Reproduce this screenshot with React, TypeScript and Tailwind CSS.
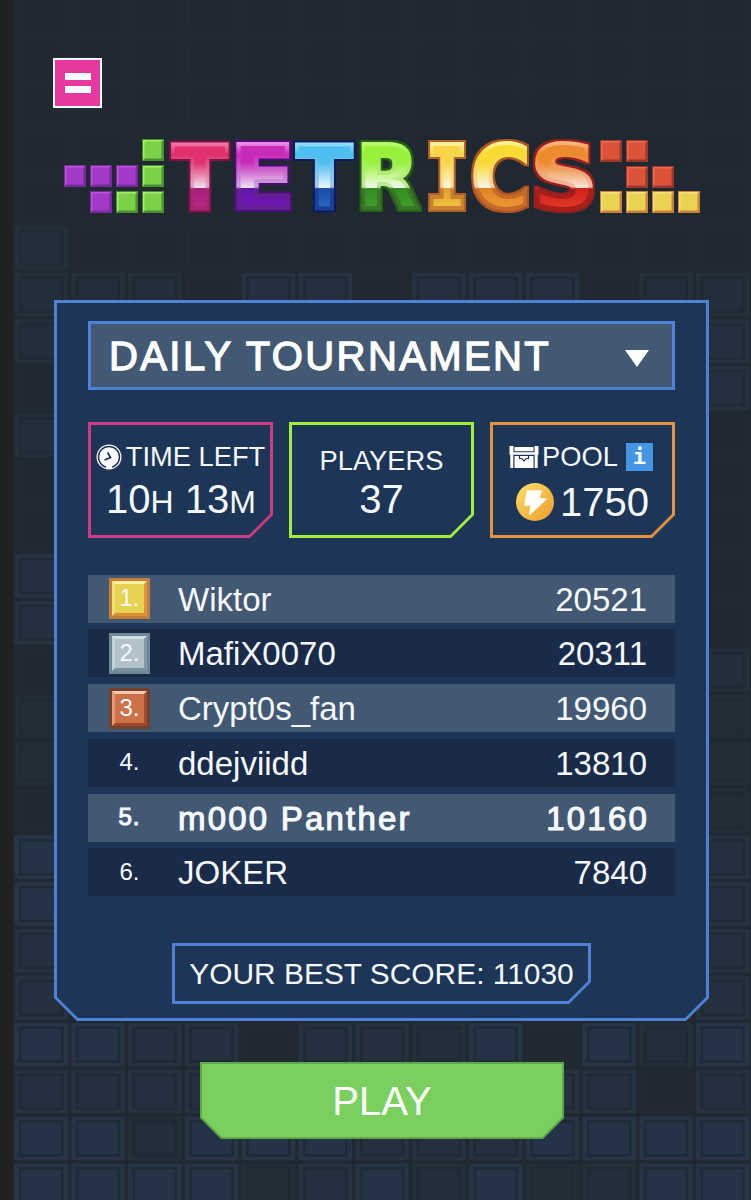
import { ReactNode, useState } from 'react'

type Player = {
  name: string
  score: number
  current?: boolean
}

const players: Player[] = [
  { name: 'Wiktor', score: 20521 },
  { name: 'MafiX0070', score: 20311 },
  { name: 'Crypt0s_fan', score: 19960 },
  { name: 'ddejviidd', score: 13810 },
  { name: 'm000 Panther', score: 10160, current: true },
  { name: 'JOKER', score: 7840 },
]

export default function App() {
  return (
    <div className="relative isolate h-[1200px] w-[751px] overflow-hidden bg-[#202931] font-['Liberation_Sans',sans-serif] text-[#f5f9ff]">
      <BlockBackground />
      <div className="flex flex-col pt-[58px]">
        <MenuButton />
        <Logo />
        <Tournament />
        <button className="ml-[200px] mt-[41px] h-[77px] w-[364px] bg-[#60a84c] p-[2px] [clip-path:polygon(0_0,100%_0,100%_56px,343px_100%,21px_100%,0_56px)]">
          <span className="flex h-full w-full items-center justify-center bg-[#7acf5e] text-[40px] leading-none text-white [clip-path:polygon(0_0,100%_0,100%_53px,340px_100%,20px_100%,0_53px)]">
            PLAY
          </span>
        </button>
      </div>
    </div>
  )
}

function MenuButton() {
  return (
    <button className="ml-[53px] flex h-[50px] w-[49px] flex-col items-center justify-center gap-[6px] border-2 border-white bg-[#e5399f]">
      <span className="h-[7px] w-[26px] bg-white" />
      <span className="h-[7px] w-[26px] bg-white" />
    </button>
  )
}

function Tournament() {
  const [open, setOpen] = useState(false)

  return (
    <div className="ml-[54px] mt-[50px] h-[721px] w-[655px] bg-[#4f82d6] p-[3px] [clip-path:polygon(0_0,100%_0,100%_698px,632px_100%,23px_100%,0_698px)]">
      <div className="flex h-full flex-col items-center bg-[#1d3557] px-[31px] pt-[18px] [clip-path:polygon(0_0,100%_0,100%_694px,628px_100%,21px_100%,0_694px)]">
        <button
          onClick={() => setOpen(!open)}
          className="flex h-[69px] w-full shrink-0 items-center justify-between border-[3px] border-[#4f82d6] bg-[#435872] pl-[18px] pr-[23px]"
        >
          <span className="whitespace-nowrap text-[40px] leading-none tracking-[2.4px] text-white [-webkit-text-stroke:1.3px_white]">DAILY TOURNAMENT</span>
          <svg className="mt-[5px] h-[17px] w-[24px]" viewBox="0 0 24 17">
            <path d={open ? 'M0 17h24L12 0z' : 'M0 0h24L12 17z'} fill="white" />
          </svg>
        </button>

        <div className="mt-[32px] flex w-full justify-between">
          <StatBox border="bg-[#cf3a84]">
            <div className="mt-[14px] flex items-center gap-[4px]">
              <ClockIcon />
              <span className="whitespace-nowrap text-[27.3px] leading-[36px]">TIME LEFT</span>
            </div>
            <p className="mt-[2px] whitespace-nowrap pl-px text-[40px] leading-[44px]">10<span className="text-[32px]">H</span> 13<span className="text-[32px]">M</span></p>
          </StatBox>
          <StatBox border="bg-[#a3ee3c]">
            <p className="mt-[18px] text-[27.3px] leading-[36px]">PLAYERS</p>
            <p className="-mt-[2px] text-[40px] leading-[44px]">37</p>
          </StatBox>
          <StatBox border="bg-[#e3923f]">
            <div className="mt-[14px] flex items-center pr-[3px]">
              <ChestIcon />
              <span className="ml-[3px] text-[27.3px] leading-[36px]">POOL</span>
              <span className="ml-[8px] flex h-[28px] w-[27px] items-center justify-center bg-[#4496e4] font-['DejaVu_Sans_Mono',monospace] text-[22px] font-bold leading-none text-white">i</span>
            </div>
            <div className="mt-[5px] flex items-center gap-[6px]">
              <CoinIcon />
              <span className="text-[40px] leading-[44px]">1750</span>
            </div>
          </StatBox>
        </div>

        <div className="mt-[36.5px] flex w-full flex-col gap-[6.8px]">
          {players.map((player, i) => <PlayerRow key={player.name} player={player} rank={i + 1} />)}
        </div>

        <div className="mt-[46.5px] h-[61px] w-[419px] shrink-0 bg-[#4f82d6] p-[3px] [clip-path:polygon(0_0,100%_0,100%_39px,397px_100%,0_100%)]">
          <div className="flex h-full items-center justify-center whitespace-nowrap bg-[#1d3557] pt-px text-[29.9px] leading-none [clip-path:polygon(0_0,100%_0,100%_35px,393px_100%,0_100%)]">
            YOUR BEST SCORE: 11030
          </div>
        </div>
      </div>
    </div>
  )
}

function StatBox({ border, children }: { border: string, children: ReactNode }) {
  return (
    <div className={`${border} h-[116px] w-[185px] p-[3px] [clip-path:polygon(0_0,100%_0,100%_93px,162px_100%,0_100%)]`}>
      <div className="flex h-full flex-col items-center bg-[#1d3557] [clip-path:polygon(0_0,100%_0,100%_89px,158px_100%,0_100%)]">
        {children}
      </div>
    </div>
  )
}

const medals = [
  'bg-[#e7d351] border-t-[#fbf0a0] border-l-[#f5e27a] border-r-[#d9953f] border-b-[#dc8b38] outline-[#c47d3d]',
  'bg-[#b2c1ca] border-t-[#d3dfe5] border-l-[#c5d2d9] border-r-[#8297a4] border-b-[#7b909d] outline-[#6f8896]',
  'bg-[#cc7148] border-t-[#f9c9ab] border-l-[#e69870] border-r-[#a14c2c] border-b-[#9b492a] outline-[#74402e]',
]

function PlayerRow({ player, rank }: { player: Player, rank: number }) {
  const medal = medals[rank - 1]
  return (
    <div className={`${rank % 2 ? 'bg-[#435872]' : 'bg-[#1a2b49]'} flex h-[48px] items-center pl-[21px] pr-[28px] text-[33px] leading-none ${player.current ? 'tracking-[2.2px] [-webkit-text-stroke:1.1px_#f5f9ff]' : ''}`}>
      <span className={`flex h-[41px] w-[41px] items-center justify-center pb-px text-[24px] ${player.current ? 'tracking-[1px]' : ''} ${medal ? medal + ' border-[6px] outline-[3px] -outline-offset-[3px]' : ''}`}>
        {rank}.
      </span>
      <span className="ml-[28px] flex-1 whitespace-nowrap pt-px">{player.name}</span>
      <span className={player.current ? '-mr-[2px] pt-px' : 'pt-px'}>{player.score}</span>
    </div>
  )
}

function ClockIcon() {
  return (
    <svg className="h-[26px] w-[26px] shrink-0" viewBox="0 0 26 26">
      <circle cx="13" cy="13" r="12.5" fill="white" />
      <circle cx="13" cy="13" r="10.5" fill="none" stroke="#1d3557" strokeWidth="1.5" />
      <path d="M10 22h6v3h-6z" fill="white" />
      <path d="M11.5 8.5l3 5-6 2.5" fill="none" stroke="#1d3557" strokeWidth="1.8" />
    </svg>
  )
}

function ChestIcon() {
  return (
    <svg className="h-[22px] w-[30px] shrink-0" viewBox="0 0 30 22">
      <path d="M.5 0h4v8h-4zM25.5 0h4v8h-4zM5.5 1h19v4.3h-19zM.5 6.3h29v2.5h-29z" fill="white" />
      <path d="M1.3 8.5h3V22h-3zM25.7 8.5h3V22h-3zM5.5 10h19v12h-19z" fill="white" />
      <path d="M10.5 9.7v2.8h2.3l2.2 2.3 2.2-2.3h2.3V9.7" fill="none" stroke="#1d3557" strokeWidth="1.2" />
    </svg>
  )
}

function CoinIcon() {
  return (
    <svg className="h-[38px] w-[38px] shrink-0" viewBox="0 0 38 38">
      <defs>
        <linearGradient id="coin" x1="0" y1="0" x2="1" y2="1">
          <stop offset="0" stopColor="#ffe06a" />
          <stop offset="1" stopColor="#ec9a2c" />
        </linearGradient>
      </defs>
      <circle cx="19" cy="19" r="19" fill="url(#coin)" />
      <path d="M11.5 8h13.5l-2.5 8H30L13.8 31l1.5-9H9z" fill="white" stroke="white" strokeWidth="1.5" strokeLinejoin="round" />
    </svg>
  )
}

type Letter = {
  char: string
  x: number
  width: number
  outline: string
  edge: [string, string, string]
  face: [string, string, string, string]
  mono?: boolean
}

// face: top, just above the shine, bottom start, bottom end
const letters: Letter[] = [
  { char: 'T', x: 110.6, width: 54.8, outline: '#7d1148', edge: ['#ef79a4', '#dcb0cb', '#a92671'], face: ['#e0306f', '#f6dfec', '#a81f7b', '#b72a85'] },
  { char: 'E', x: 167.7, width: 65.3, outline: '#4b0c79', edge: ['#ee8be6', '#c9a5de', '#652090'], face: ['#c92bb9', '#e9dff7', '#6015a7', '#7519b8'] },
  { char: 'T', x: 234.4, width: 55.8, outline: '#0b1c58', edge: ['#93dcfa', '#a6c8ea', '#1c3e96'], face: ['#4dbeef', '#edf6fd', '#1c4da9', '#2b68c9'] },
  { char: 'R', x: 294, width: 62.9, outline: '#286018', edge: ['#baf96d', '#c1e89f', '#397726'], face: ['#98f13b', '#f1faeb', '#318c1f', '#45a22b'] },
  { char: 'I', x: 363.7, width: 42.6, outline: '#b2602a', edge: ['#fff2a0', '#f6dda0', '#ca812e'], face: ['#f8d548', '#fff9df', '#dda22e', '#f8c840'], mono: true },
  { char: 'C', x: 409, width: 59.3, outline: '#ac5525', edge: ['#fff18c', '#f9d1a7', '#c86b29'], face: ['#f8db32', '#fdf4e8', '#e08424', '#ee9a33'] },
  { char: 'S', x: 468.6, width: 67, outline: '#981f1d', edge: ['#f6b47a', '#f4b7a6', '#a71f1d'], face: ['#ed892e', '#fbe2da', '#ce231b', '#e8382a'] },
]

const purple = ['#a33ac7', '#b854d6', '#79289d']
const green = ['#7bd246', '#a4ea6e', '#4b8f30']
const red = ['#dc5338', '#e66b52', '#99382b']
const yellow = ['#e9d350', '#f3e07a', '#cc7e3a']

const blocks = [
  { x: 80, y: 3, color: green },
  { x: 2, y: 29, color: purple },
  { x: 28, y: 29, color: purple },
  { x: 54, y: 29, color: purple },
  { x: 80, y: 29, color: green },
  { x: 28, y: 55, color: purple },
  { x: 54, y: 55, color: green },
  { x: 80, y: 55, color: green },
  { x: 538, y: 4, color: red },
  { x: 564, y: 4, color: red },
  { x: 564, y: 30, color: red },
  { x: 590, y: 30, color: red },
  { x: 538, y: 55, color: yellow },
  { x: 564, y: 55, color: yellow },
  { x: 590, y: 55, color: yellow },
  { x: 616, y: 55, color: yellow },
]

function Logo() {
  return (
    <svg className="ml-[62px] -mt-[2px] h-[144px] w-[642px]" viewBox="0 -30 642 144">
      {blocks.map(({ x, y, color }) => (
        <g key={`${x}-${y}`}>
          <rect x={x} y={y} width="22" height="22" fill={color[2]} />
          <path d={`M${x + 1} ${y + 1}h20l-3 3h-14v14l-3 3z`} fill={color[1]} />
          <rect x={x + 2.5} y={y + 2.5} width="17" height="17" fill={color[0]} />
        </g>
      ))}
      {letters.map((letter, i) => <LogoLetter key={i} id={i} letter={letter} />)}
    </svg>
  )
}

function LogoLetter({ letter, id }: { letter: Letter, id: number }) {
  const { char, x, width, outline, edge, face, mono } = letter
  return (
    <g>
      <defs>
        <linearGradient id={`face${id}`} gradientUnits="userSpaceOnUse" x1="0" y1="6" x2="0" y2="75">
          <stop offset="0.3" stopColor={face[0]} />
          <stop offset="0.66" stopColor={face[1]} />
          <stop offset="0.67" stopColor={face[2]} />
          <stop offset="1" stopColor={face[3]} />
        </linearGradient>
        <linearGradient id={`edge${id}`} gradientUnits="userSpaceOnUse" x1="0" y1="6" x2="0" y2="75">
          <stop offset="0.02" stopColor={edge[0]} />
          <stop offset="0.18" stopColor={face[0]} />
          <stop offset="0.65" stopColor={edge[1]} />
          <stop offset="0.68" stopColor={edge[2]} />
          <stop offset="1" stopColor={edge[2]} />
        </linearGradient>
        <filter id={`outline${id}`} x="-20%" y="-20%" width="140%" height="140%" colorInterpolationFilters="sRGB">
          <feMorphology in="SourceAlpha" operator="dilate" radius="1.5" result="grown" />
          <feFlood floodColor={outline} />
          <feComposite in2="grown" operator="in" result="rim" />
          <feMerge>
            <feMergeNode in="rim" />
            <feMergeNode in="SourceGraphic" />
          </feMerge>
        </filter>
      </defs>
      <text
        x={x}
        y="72"
        textLength={width}
        lengthAdjust="spacingAndGlyphs"
        fontSize="87"
        fontWeight="bold"
        fill={`url(#face${id})`}
        stroke={`url(#edge${id})`}
        strokeWidth="4"
        filter={`url(#outline${id})`}
        className={mono ? "font-['DejaVu_Sans_Mono',monospace]" : "font-['DejaVu_Sans',sans-serif]"}
      >
        {char}
      </text>
    </g>
  )
}

// one digit per cell, 0 is an empty cell and 4 the brightest block
const cells = [
  '0000000000000',
  '0000000000000',
  '0000000000000',
  '0000000000000',
  '0000000000000',
  '2000000000000',
  '2220330333022',
  '2000000000003',
  '0000000000003',
  '2000000000000',
  '0000000000000',
  '0000000000000',
  '3000000000000',
  '3000000000000',
  '0000000000002',
  '1000000000001',
  '1000000000001',
  '0000000000001',
  '4000000000003',
  '4000000000003',
  '3000000000003',
  '3000000000003',
  '4433033240424',
  '3333333333303',
  '4424443334444',
  '4444134241244',
]

const fills = ['#202932', '#222c37', '#232e3c', '#243040', '#243346']
const rims = ['#212a33', '#222d37', '#243039', '#253240', '#263545']

function BlockBackground() {
  return (
    <svg className="absolute inset-0 -z-10 h-[1200px] w-[751px]" viewBox="0 0 751 1200">
      <rect width="13" height="1200" fill="#212120" />
      {cells.map((row, r) => row.split('').map((cell, c) => {
        const level = Number(cell)
        const x = 14.5 + c * 56.8
        const y = 226 + (r - 5) * 46.88
        return (
          <g key={`${r}-${c}`}>
            <rect x={x} y={y} width="53.5" height="43.5" fill={rims[level]} />
            <rect x={x + 4.5} y={y + 3.5} width="44.5" height="36.5" fill={level ? '#1f2a35' : '#202932'} />
            <rect x={x + 7} y={y + 6} width="39.5" height="31.5" fill={fills[level]} />
          </g>
        )
      }))}
    </svg>
  )
}
